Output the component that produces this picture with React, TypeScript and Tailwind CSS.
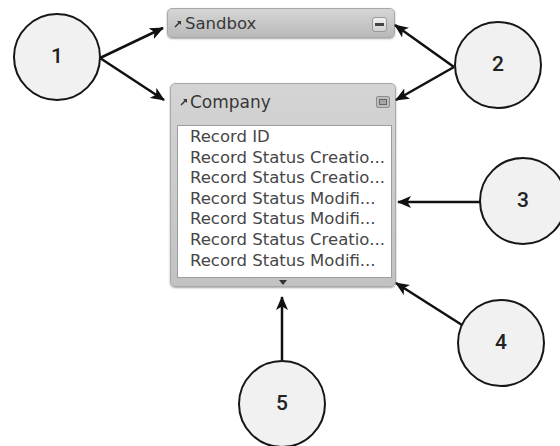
import React from "react";

const rows = [
	"Record ID",
	"Record Status Creatio...",
	"Record Status Creatio...",
	"Record Status Modifi...",
	"Record Status Modifi...",
	"Record Status Creatio...",
	"Record Status Modifi...",
];

function Callout({ n, className }: { n: number; className: string }) {
	return (
		<div
			className={`absolute w-[88px] h-[88px] rounded-full border-[2.5px] border-[#161616] bg-[#f1f1f1] flex items-center justify-center text-[21px] font-medium text-[#222] ${className}`}
			style={{ fontFamily: "Roboto, sans-serif" }}
		>
			{n}
		</div>
	);
}

function TinyArrow() {
	return (
		<svg width="8" height="8" viewBox="0 0 8 8" className="shrink-0">
			<path d="M1 7 L6 2" stroke="#333" strokeWidth="1.4" />
			<path d="M3 1 L7 1 L7 5 Z" fill="#333" />
		</svg>
	);
}

function Arrows() {
	const lines: [number, number, number, number][] = [
		[100, 58, 163, 28],
		[100, 58, 164, 100],
		[454, 67, 395, 25],
		[454, 67, 396, 100],
		[480, 202, 398, 202],
		[462, 325, 396, 283],
		[282, 360, 282, 297],
	];
	return (
		<svg className="absolute inset-0 pointer-events-none" width="560" height="446">
			<defs>
				<marker
					id="head"
					viewBox="0 0 14 12"
					refX="13"
					refY="6"
					markerWidth="14"
					markerHeight="12"
					markerUnits="userSpaceOnUse"
					orient="auto"
				>
					<path d="M0 0 L14 6 L0 12 L3.5 6 Z" fill="#111" />
				</marker>
			</defs>
			{lines.map(([x1, y1, x2, y2], i) => (
				<line
					key={i}
					x1={x1}
					y1={y1}
					x2={x2}
					y2={y2}
					stroke="#111"
					strokeWidth="2.5"
					markerEnd="url(#head)"
				/>
			))}
		</svg>
	);
}

export default function App() {
	return (
		<div
			className="relative w-[560px] h-[446px] bg-white overflow-hidden"
			style={{ fontFamily: "'DejaVu Sans', sans-serif" }}
		>
			{/* Sandbox table, collapsed */}
			<div className="absolute left-[167px] top-[8px] w-[228px] h-[30px] rounded-[5px] border border-[#a9a9a9] bg-gradient-to-b from-[#d6d6d6] to-[#b9b9b9] shadow-[0_1px_2px_rgba(0,0,0,0.35)] flex items-center pl-[6px] pr-[7px] pt-[2px]">
				<TinyArrow />
				<span className="ml-[3px] text-[16.5px] text-[#383838] leading-none">Sandbox</span>
				<div className="ml-auto w-[15px] h-[15px] rounded-[3px] border border-[#9a9a9a] bg-gradient-to-b from-[#f2f2f2] to-[#d0d0d0] flex items-center justify-center">
					<div className="w-[9px] h-[3px] bg-[#444]" />
				</div>
			</div>

			{/* Company table */}
			<div className="absolute left-[170px] top-[83px] w-[226px] h-[204px] rounded-[5px] border border-[#a9a9a9] bg-gradient-to-b from-[#d4d4d4] to-[#c2c2c2] shadow-[0_1px_2px_rgba(0,0,0,0.35)] flex flex-col">
				<div className="flex items-center h-[32px] pl-[9px] pr-[5px] pt-[4px]">
					<TinyArrow />
					<span className="ml-[2px] text-[17px] text-[#383838] leading-none">Company</span>
					<div className="ml-auto w-[14px] h-[12px] rounded-[2px] border border-[#8c8c8c] bg-[#bdbdbd] flex items-center justify-center">
						<div className="w-[8px] h-[6px] border border-[#666] bg-[#a5a5a5]" />
					</div>
				</div>
				<div className="mt-[9px] ml-[6px] mr-[3px] h-[153px] bg-white border border-[#9d9d9d] pl-[12px] pt-[1px] overflow-hidden">
					{rows.map((r, i) => (
						<div key={i} className="text-[16.5px] leading-[20.6px] text-[#464646] whitespace-nowrap">
							{r}
						</div>
					))}
				</div>
				<div className="flex-1 flex items-center justify-center">
					<svg width="8" height="5" viewBox="0 0 8 5">
						<path d="M0 0 L8 0 L4 5 Z" fill="#333" />
					</svg>
				</div>
			</div>

			<Arrows />

			<Callout n={1} className="left-[13px] top-[13px]" />
			<Callout n={2} className="left-[454px] top-[21px]" />
			<Callout n={3} className="left-[479px] top-[157px]" />
			<Callout n={4} className="left-[457px] top-[299px]" />
			<Callout n={5} className="left-[238px] top-[360px]" />
		</div>
	);
}
